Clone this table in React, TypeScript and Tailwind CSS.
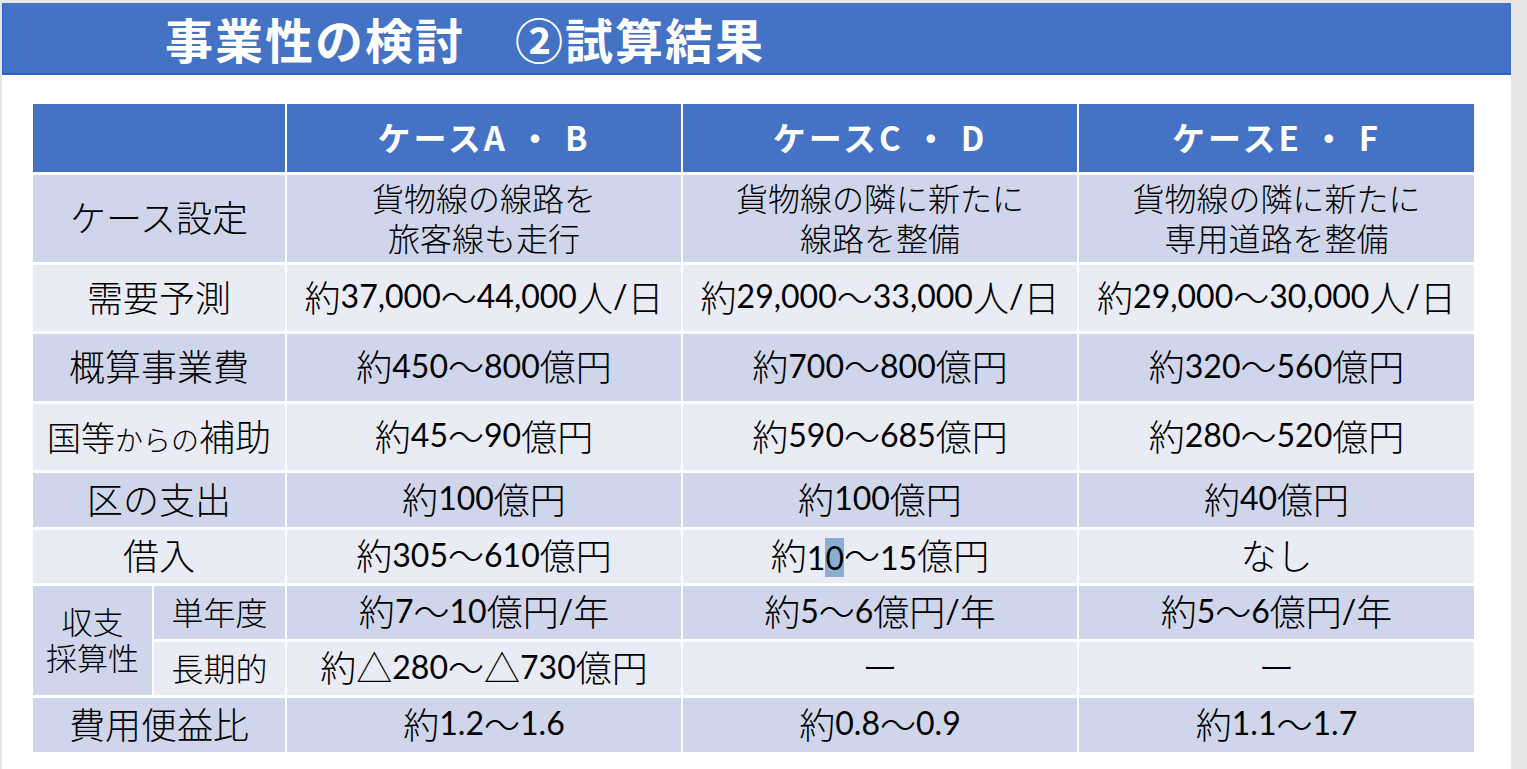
import React from "react";

const CJK = "font-['Noto_Sans_CJK_JP',sans-serif]";

function T({ s }: { s: string }) {
  const parts = s.split(/([\x20-\x7E]+)/).filter((p) => p.length > 0);
  return (
    <>
      {parts.map((p, i) =>
        /^[\x20-\x7E]+$/.test(p) ? (
          <span key={i} className="font-['Lato','Noto_Sans_CJK_JP',sans-serif] text-[0.89em] font-normal">
            {p}
          </span>
        ) : (
          <span key={i}>{p}</span>
        )
      )}
    </>
  );
}

const DARK = "bg-[#cfd5ea]";
const LIGHT = "bg-[#e9ebf5]";

function Cell({
  children,
  bg,
  className = "",
}: {
  children?: React.ReactNode;
  bg: string;
  className?: string;
}) {
  return (
    <div
      className={`${bg} flex items-center justify-center text-center text-black pb-[3px] ${className}`}
    >
      {children}
    </div>
  );
}

type Row = { label: React.ReactNode; bg: string; cells: React.ReactNode[] };

export default function App() {
  const rows: Row[] = [
    {
      label: <T s="需要予測" />,
      bg: LIGHT,
      cells: ["約37,000～44,000人/日", "約29,000～33,000人/日", "約29,000～30,000人/日"].map((s) => <T s={s} />),
    },
    {
      label: <T s="概算事業費" />,
      bg: DARK,
      cells: ["約450～800億円", "約700～800億円", "約320～560億円"].map((s) => <T s={s} />),
    },
    {
      label: (
        <span>
          <span className="text-[34px]">国等</span>
          <span className="text-[28px]">からの</span>
          <span className="text-[36px]">補助</span>
        </span>
      ),
      bg: LIGHT,
      cells: ["約45～90億円", "約590～685億円", "約280～520億円"].map((s) => <T s={s} />),
    },
    {
      label: <T s="区の支出" />,
      bg: DARK,
      cells: ["約100億円", "約100億円", "約40億円"].map((s) => <T s={s} />),
    },
    {
      label: <T s="借入" />,
      bg: LIGHT,
      cells: [
        <T s="約305～610億円" />,
        <span>
          約
          <span className="font-['Lato','Noto_Sans_CJK_JP',sans-serif] text-[0.89em] font-normal">
            1<span className="bg-[#8aaed3]">0</span>
          </span>
          ～
          <span className="font-['Lato','Noto_Sans_CJK_JP',sans-serif] text-[0.89em] font-normal">15</span>
          億円
        </span>,
        <T s="なし" />,
      ],
    },
  ];

  return (
    <div className={`w-[1527px] h-[769px] bg-[#e6e6e6] overflow-hidden ${CJK}`}>
      <div className="ml-[2px] mt-[3px] w-[1509px] h-[766px] bg-white">
        {/* Title bar */}
        <div className="h-[72px] bg-[#4472c4] border-b-[2px] border-l border-[#2c62c4] flex items-center pl-[162px]">
          <h1 className="text-white font-bold text-[48px] leading-none tracking-[2px]">
            事業性の検討　②試算結果
          </h1>
        </div>

        {/* Table */}
        <div className="ml-[31px] mt-[29px] grid grid-cols-[119px_131px_394px_394px_395px] grid-rows-[68px_87px_66px_67px_66px_54px_53px_53px_53px_54px] gap-x-[2px] gap-y-[3px] w-[1441px] text-[36px] font-light leading-[1.15]">
          {/* header */}
          <div className="col-span-2 bg-[#4472c4]" />
          {["ケースA ・ B", "ケースC ・ D", "ケースE ・ F"].map((h) => (
            <div
              key={h}
              className="bg-[#4472c4] flex items-center justify-center text-white font-bold text-[33px] tracking-[3px] whitespace-pre"
            >
              {h}
            </div>
          ))}

          {/* ケース設定 */}
          <Cell bg={DARK} className="col-span-2">
            ケース設定
          </Cell>
          {[
            ["貨物線の線路を", "旅客線も走行"],
            ["貨物線の隣に新たに", "線路を整備"],
            ["貨物線の隣に新たに", "専用道路を整備"],
          ].map((l, i) => (
            <Cell key={i} bg={DARK} className="text-[32px] flex-col gap-0">
              <span className="block h-[40px] leading-[40px]">{l[0]}</span>
              <span className="block h-[40px] leading-[40px]">{l[1]}</span>
            </Cell>
          ))}

          {rows.map((r, ri) => (
            <React.Fragment key={ri}>
              <Cell bg={r.bg} className="col-span-2 whitespace-nowrap">
                {r.label}
              </Cell>
              {r.cells.map((c, ci) => (
                <Cell key={ci} bg={r.bg} className="whitespace-nowrap">
                  {c}
                </Cell>
              ))}
            </React.Fragment>
          ))}

          {/* 収支採算性 */}
          <Cell bg={DARK} className="row-span-2 flex-col text-[31px]">
            <span className="block h-[36px] leading-[36px]">収支</span>
            <span className="block h-[36px] leading-[36px]">採算性</span>
          </Cell>
          <Cell bg={DARK} className="text-[32px]">
            単年度
          </Cell>
          {["約7～10億円/年", "約5～6億円/年", "約5～6億円/年"].map((s, i) => (
            <Cell key={i} bg={DARK} className="whitespace-nowrap">
              <T s={s} />
            </Cell>
          ))}
          <Cell bg={LIGHT} className="text-[32px]">
            長期的
          </Cell>
          <Cell bg={LIGHT} className="whitespace-nowrap">
            <T s="約△280～△730億円" />
          </Cell>
          <Cell bg={LIGHT}>ー</Cell>
          <Cell bg={LIGHT}>ー</Cell>

          {/* 費用便益比 */}
          <Cell bg={DARK} className="col-span-2">
            費用便益比
          </Cell>
          {["約1.2～1.6", "約0.8～0.9", "約1.1～1.7"].map((s, i) => (
            <Cell key={i} bg={DARK} className="whitespace-nowrap">
              <T s={s} />
            </Cell>
          ))}
        </div>
      </div>
    </div>
  );
}
